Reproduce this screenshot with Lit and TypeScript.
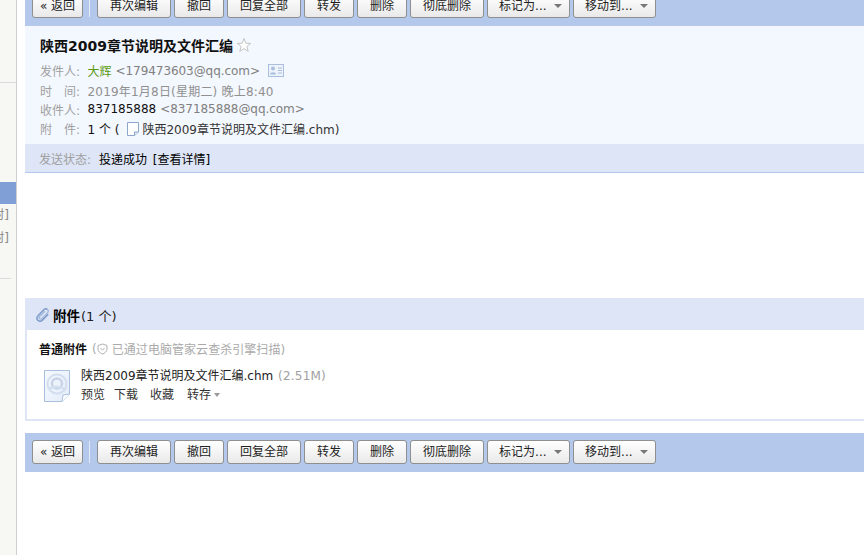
import { LitElement, html, css, svg } from "lit";
import { customElement } from "lit/decorators.js";

const fileIcon = svg`<svg class="ico-file" width="14" height="16" viewBox="0 0 14 16"><path d="M1.5 1.5H12.5V11L8.5 14.5H1.5Z" fill="#fff" stroke="#8ea6cc"/><path d="M8.5 14.5V11H12.5" fill="#dfe8f6" stroke="#8ea6cc"/></svg>`;
const star = svg`<svg class="ico-star" width="16" height="16" viewBox="0 0 16 16"><path d="M8 1.5L9.8 6.2L14.6 6.4L10.9 9.5L12.2 14.3L8 11.6L3.8 14.3L5.1 9.5L1.4 6.4L6.2 6.2Z" fill="#fff" stroke="#c4c4c4"/></svg>`;
const card = svg`<svg width="16" height="13" viewBox="0 0 16 13"><rect x="0.5" y="0.5" width="15" height="12" fill="#eef3fb" stroke="#a9bfdf"/><circle cx="5" cy="4.6" r="2" fill="#a9bfdf"/><path d="M2 10.5C2 7.5 8 7.5 8 10.5Z" fill="#a9bfdf"/><path d="M10 4H14M10 6.5H14M10 9H14" stroke="#a9bfdf"/></svg>`;
const clip = svg`<svg width="14" height="16" viewBox="0 0 14 16"><path d="M11.5 2.5C10.3 1.3 8.8 1.8 7.8 2.8L2 8.8C.3 10.6 1 12.4 2 13.4C3.2 14.5 5 14.5 6.4 13.1L12.2 7.2" fill="none" stroke="#7d9cc8" stroke-width="1.5"/><path d="M11.5 2.5C12.7 3.7 12.3 5 11.2 6.1L6 11.4C5 12.4 4 12.1 3.5 11.6C3 11 3 10.2 3.8 9.3L8.8 4.2" fill="none" stroke="#9db6da" stroke-width="1.3"/></svg>`;
const shield = svg`<svg class="ico-shield" width="11" height="12" viewBox="0 0 11 12"><path d="M5.5 1L10 2.5V6C10 8.5 7.8 10.2 5.5 11C3.2 10.2 1 8.5 1 6V2.5Z" fill="none" stroke="#b0b0b0"/><path d="M3.5 5L5.5 7.2L7.5 5" fill="none" stroke="#b0b0b0"/></svg>`;
const bigFile = svg`<svg width="27" height="32" viewBox="0 0 27 32"><defs><linearGradient id="pg" x1="0" y1="0" x2="1" y2="1"><stop offset="0" stop-color="#f6f9fe"/><stop offset="1" stop-color="#e3ecf9"/></linearGradient></defs><path d="M.5 .5H25.5V24L18 31.5H.5Z" fill="url(#pg)" stroke="#a8bfe0"/><path d="M18 31.5L19 25L25.5 24" fill="#fff" stroke="#a8bfe0"/><circle cx="13" cy="14" r="9.5" fill="none" stroke="#d3deee" stroke-width="2"/><circle cx="13" cy="13.5" r="5" fill="none" stroke="#c7d4e8" stroke-width="2.5"/><path d="M5 19C9 16 17 16 22 20" fill="none" stroke="#d3deee" stroke-width="2.5"/></svg>`;

@customElement("app-root")
export class AppRoot extends LitElement {
  static styles = css`
    :host {
      display: block;
      width: 864px;
      height: 555px;
      overflow: hidden;
      background: #fff;
      font-family: "DejaVu Sans", "Noto Sans CJK SC", sans-serif;
      font-size: 12px;
      color: #000;
    }
    .page { display: flex; height: 555px; }
    .side {
      width: 16px;
      flex: none;
      background: #f7f7f3;
      border-right: 1px solid #cfcfcf;
      overflow: hidden;
      display: flex;
      flex-direction: column;
      align-items: stretch;
    }
    .side-line { height: 1px; background: #dcdcdc; margin-top: 82px; }
    .side-sel { height: 22px; background: #7f9fd6; margin-top: 99px; }
    .side-txt {
      height: 23px;
      line-height: 23px;
      color: #888;
      white-space: nowrap;
      display: flex;
      justify-content: flex-end;
      width: 9px;
    }
    .side-line2 { height: 1px; background: #dcdcdc; margin-top: 28px; width: 11px; }
    .main { margin-left: 8px; flex: 1; min-width: 0; display: flex; flex-direction: column; }
    .bar {
      height: 39px;
      flex: none;
      box-sizing: border-box;
      background: #b3c8ea;
      padding: 7px 0 0 7px;
      display: flex;
      gap: 3px;
    }
    .bar.top { margin-top: -13px; }
    .btn {
      height: 24px;
      box-sizing: border-box;
      border: 1px solid #8f8f8f;
      border-radius: 3px;
      background: linear-gradient(#ffffff, #e9e9e9);
      color: #222;
      line-height: 22px;
      padding: 0 12px;
      white-space: nowrap;
      display: flex;
      align-items: center;
      font-family: inherit;
      font-size: 12px;
    }
    .btn.menu { padding: 0 8px 0 11px; width: 83px; box-sizing: border-box; }
    .caret {
      width: 0;
      height: 0;
      border-left: 4px solid transparent;
      border-right: 4px solid transparent;
      border-top: 4px solid #777;
      margin-left: 7px;
    }
    .back { width: 51px; justify-content: center; padding: 0; }
    .sep { width: 1px; height: 22px; background: #e4ebf7; margin: 1px 3px 0 3px; }
    .sep + .btn { margin-left: 1px; }
    .head {
      height: 118px;
      flex: none;
      box-sizing: border-box;
      background: #f3f7fe;
      padding: 9px 0 0 15px;
    }
    .title {
      display: flex;
      align-items: center;
      gap: 2px;
      height: 20px;
      font-size: 14px;
      font-weight: bold;
      color: #111;
    }
    .ico-star { margin-left: 1px; }
    .rows { margin-top: 6px; }
    .row { display: flex; align-items: center; height: 19.4px; white-space: nowrap; color: #111; }
    .lbl { width: 47.5px; flex: none; color: #a0a0a0; }
    .gray { color: #909090; letter-spacing: 0.2px; }
    .mail { color: #808080; margin-left: 4px; letter-spacing: -0.06px; }
    .green { color: #5a9a10; }
    .card { display: flex; margin-left: 8px; }
    .ico-file { margin: 1px 2px 0 7px; }
    .aname { color: #333; }
    .status {
      height: 29px;
      flex: none;
      box-sizing: border-box;
      background: #dde5f6;
      border-bottom: 1px solid #b3c8ea;
      padding-left: 14px;
      display: flex;
      align-items: center;
      white-space: nowrap;
    }
    .status .lbl { width: 60px; }
    .status .val { word-spacing: 2px; }
    .gap { height: 125px; flex: none; }
    .att-head {
      height: 32px;
      flex: none;
      box-sizing: border-box;
      background: #dde5f6;
      padding: 2px 0 0 11px;
      display: flex;
      align-items: center;
      font-size: 13px;
    }
    .att-head b { margin-left: 3px; font-size: 13.5px; }
    .att-head span { color: #222; margin-left: 1px; }
    .att-box {
      height: 91px;
      flex: none;
      box-sizing: border-box;
      border-left: 2px solid #dde5f6;
      border-bottom: 2px solid #dde5f6;
      padding: 10px 0 0 12px;
    }
    .att-sum { display: flex; align-items: center; height: 17px; white-space: nowrap; }
    .att-sum b { color: #111; margin-right: 5px; }
    .att-sum .g { color: #aaa; letter-spacing: 0.05px; }
    .ico-shield { margin: 0 4px 0 0; }
    .file { display: flex; margin: 10px 0 0 5px; }
    .file-ico { width: 37px; flex: none; padding-top: 3px; }
    .fname { height: 17px; line-height: 18px; white-space: nowrap; color: #222; }
    .fname span { color: #a0a0a0; margin-left: 1px; letter-spacing: 0.2px; }
    .acts { display: flex; height: 19px; align-items: center; color: #333; }
    .acts span:nth-child(1) { margin-right: 9px; }
    .acts span:nth-child(2) { margin-right: 12px; }
    .acts span:nth-child(3) { margin-right: 13px; }
    .acts .caret { border-top-color: #999; margin-left: 3px; border-left-width: 3.5px; border-right-width: 3.5px; margin-top: 2px; }
    .spacer { height: 12px; flex: none; }
  `;

  private bar(cls: string) {
    return html`<div class="bar ${cls}">
      <div class="btn back">« 返回</div>
      <div class="sep"></div>
      <div class="btn">再次编辑</div>
      <div class="btn">撤回</div>
      <div class="btn">回复全部</div>
      <div class="btn">转发</div>
      <div class="btn">删除</div>
      <div class="btn">彻底删除</div>
      <div class="btn menu">标记为...<i class="caret"></i></div>
      <div class="btn menu">移动到...<i class="caret"></i></div>
    </div>`;
  }

  render() {
    return html`<div class="page">
      <div class="side">
        <div class="side-line"></div>
        <div class="side-sel"></div>
        <div>
          <div class="side-txt">封]</div>
          <div class="side-txt">封]</div>
        </div>
        <div class="side-line2"></div>
      </div>
      <div class="main">
        ${this.bar("top")}
        <div class="head">
          <div class="title">陕西2009章节说明及文件汇编 ${star}</div>
          <div class="rows">
            <div class="row"><span class="lbl">发件人:</span><span class="green">大辉</span><span class="mail">&lt;179473603@qq.com&gt;</span><span class="card">${card}</span></div>
            <div class="row"><span class="lbl">时　间:</span><span class="gray">2019年1月8日(星期二) 晚上8:40</span></div>
            <div class="row"><span class="lbl">收件人:</span><span>837185888</span><span class="mail">&lt;837185888@qq.com&gt;</span></div>
            <div class="row"><span class="lbl">附　件:</span><span>1 个 (</span>${fileIcon}<span class="aname">陕西2009章节说明及文件汇编.chm)</span></div>
          </div>
        </div>
        <div class="status"><span class="lbl">发送状态:</span><span class="val">投递成功 [查看详情]</span></div>
        <div class="gap"></div>
        <div class="att-head">${clip}<b>附件</b><span>(1 个)</span></div>
        <div class="att-box">
          <div class="att-sum"><b>普通附件</b><span class="g">(</span>${shield}<span class="g">已通过电脑管家云查杀引擎扫描)</span></div>
          <div class="file">
            <div class="file-ico">${bigFile}</div>
            <div>
              <div class="fname">陕西2009章节说明及文件汇编.chm <span>(2.51M)</span></div>
              <div class="acts"><span>预览</span><span>下载</span><span>收藏</span><span>转存</span><i class="caret"></i></div>
            </div>
          </div>
        </div>
        <div class="spacer"></div>
        ${this.bar("")}
      </div>
    </div>`;
  }
}
